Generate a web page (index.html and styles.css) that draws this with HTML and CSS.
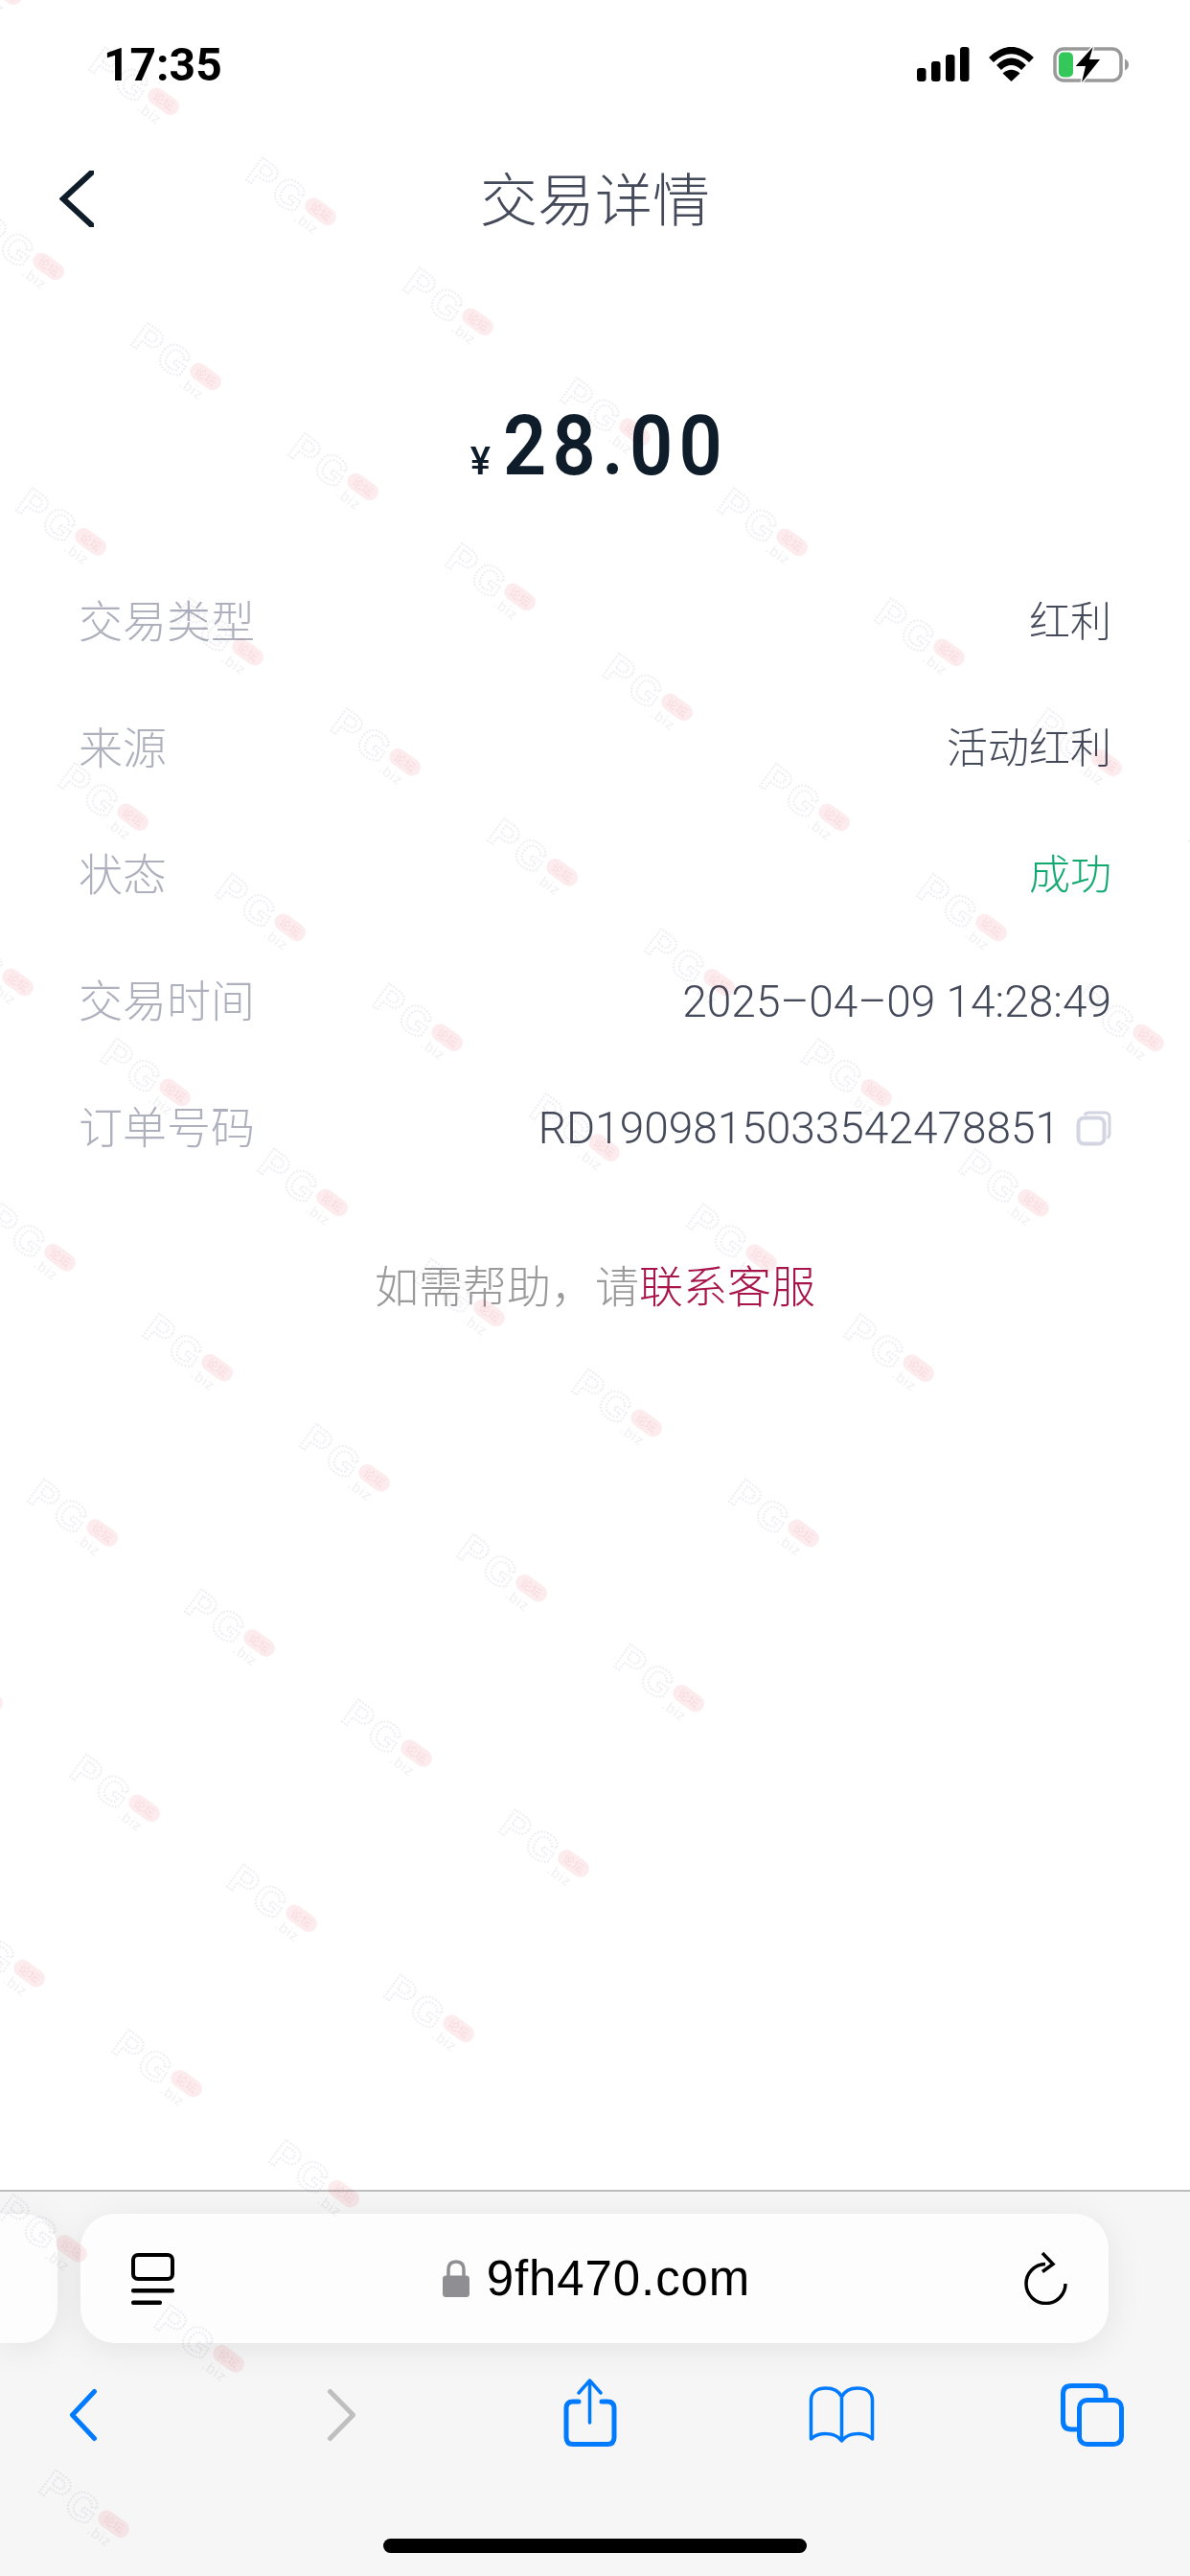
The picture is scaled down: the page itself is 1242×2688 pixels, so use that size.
FILE: index.html
```html
<!DOCTYPE html>
<html lang="zh-CN">
<head>
  <meta charset="UTF-8">
  <meta name="viewport" content="width=device-width, initial-scale=1.0">
  <title>交易详情</title>
  <link rel="stylesheet" href="styles.css">
</head>
<body>
  <div id="page">
    <div class="status-bar">
      <span class="time">17:35</span>
      <div class="status-icons">
        <svg width="55" height="36" viewBox="0 0 55 36">
          <rect x="0" y="22" width="9.5" height="14" rx="3"/>
          <rect x="15" y="15" width="9.5" height="21" rx="3"/>
          <rect x="30" y="8" width="9.5" height="28" rx="3"/>
          <rect x="45" y="0" width="9.5" height="36" rx="3"/>
        </svg>
        <svg width="47" height="36" viewBox="0 0 47 36">
          <path d="M2.5 13.5Q23.5 -6.500 44.500 13.500" fill="none" stroke="#000" stroke-width="7"/>
          <path d="M10.500 21.500Q23.500 9 36.500 21.500" fill="none" stroke="#000" stroke-width="7"/>
          <path d="M23.500 36L14.500 27.500Q23.500 20 32.500 27.500Z"/>
        </svg>
        <svg width="79" height="37" viewBox="0 0 79 37">
          <rect x="2" y="2" width="69" height="33" rx="9" fill="none" stroke="#999" stroke-width="3.500"/>
          <rect x="6" y="5.500" width="15" height="26" rx="5" fill="#34c759"/>
          <path d="M75 12.500C78 14 79 16 79 18.500C79 21 78 23 75 24.500Z" fill="#999"/>
          <path d="M41.700 0L23.700 20H34L30 37L49 13H38Z" stroke="#fff" stroke-width="3" paint-order="stroke"/>
        </svg>
      </div>
    </div>

    <div class="nav">
      <svg class="nav-back" width="36" height="59" viewBox="0 0 36 59">
        <path d="M38 -2L4 29.500L38 61" fill="none" stroke="#0f1d2b" stroke-width="6"/>
      </svg>
      <div class="nav-title">交易详情</div>
    </div>

    <div class="amount">
      <span class="amount-unit">¥</span><span class="amount-value">28.00</span>
    </div>

    <div class="rows">
      <div class="row"><span class="label">交易类型</span><span class="value">红利</span></div>
      <div class="row"><span class="label">来源</span><span class="value">活动红利</span></div>
      <div class="row"><span class="label">状态</span><span class="value success">成功</span></div>
      <div class="row"><span class="label">交易时间</span><span class="value num">2025–04–09 14:28:49</span></div>
      <div class="row">
        <span class="label">订单号码</span>
        <span class="value num with-icon">RD1909815033542478851
          <svg width="37" height="37" viewBox="0 0 37 37">
            <path d="M9 4.500C10 2.500 12 2 14 2H30C33.500 2 35 3.500 35 7V24C35 26 34.500 27.500 32.500 28.500" fill="none" stroke="#d3d6e2" stroke-width="3"/>
            <rect x="2.500" y="7.500" width="27" height="27" rx="6" fill="none" stroke="#d3d6e2" stroke-width="4"/>
          </svg>
        </span>
      </div>
    </div>

    <div class="help">如需帮助，请<span class="help-link">联系客服</span></div>

    <div class="toolbar">
      <div class="address-row">
        <div class="tab-stub"></div>
        <div class="address">
          <svg width="45" height="54" viewBox="0 0 45 54">
            <rect x="2" y="2" width="41" height="25" rx="5" fill="none" stroke="#000" stroke-width="4"/>
            <rect x="0" y="37" width="45" height="4.500" rx="2"/>
            <rect x="0" y="49.500" width="32" height="4.500" rx="2"/>
          </svg>
          <div class="url">
            <svg width="28" height="39" viewBox="0 0 28 39">
              <path d="M6 18V10.500C6 5 9 2 14 2C19 2 22 5 22 10.500V18" fill="none" stroke="#8e8e93" stroke-width="3.500"/>
              <rect x="0" y="16.500" width="28" height="22.500" rx="3.500" fill="#8e8e93"/>
            </svg>
            <span class="url-text">9fh470.com</span>
          </div>
          <svg width="46" height="55" viewBox="0 0 46 55">
            <path d="M22 12.500A20.500 20.500 0 1 0 43 33" fill="none" stroke="#000" stroke-width="3.500"/>
            <path d="M19 1L30 12.500L19 20.500" fill="none" stroke="#000" stroke-width="3.500"/>
          </svg>
        </div>
      </div>

      <div class="tools">
        <svg width="100" height="80" viewBox="0 0 100 80">
          <path d="M61.500 15.500L38.500 40L61.500 64.500" class="tool-line"/>
        </svg>
        <svg width="100" height="80" viewBox="0 0 100 80">
          <path d="M44.500 15.500L68.500 40L44.500 64.500" class="tool-line off"/>
        </svg>
        <svg width="100" height="80" viewBox="0 0 100 80">
          <path d="M41 26H35C30.500 26 28 28.500 28 33V63C28 68 30.500 70.500 35 70.500H71C75.500 70.500 78 68 78 63V33C78 28.500 75.500 26 71 26H65" class="tool-line"/>
          <path d="M52.500 4V48M41 17L52.500 4L64 17" class="tool-line thin"/>
        </svg>
        <svg width="100" height="80" viewBox="0 0 100 80">
          <path d="M52.500 21C49 14 42 12 36 12C27 12 20.500 16 20.500 25V65C28 58 45 57 52.500 67C60 57 77 58 84.500 65V25C84.500 16 78 12 69 12C63 12 56 14 52.500 21V66" class="tool-line thin"/>
        </svg>
        <svg width="100" height="80" viewBox="0 0 100 80">
          <path d="M34 55H29C23.500 55 20.500 52 20.500 46V18C20.500 12.500 23.500 9.500 29 9.500H56C62 9.500 65 12.500 65 18V22" class="tool-line"/>
          <rect x="37.500" y="24.500" width="44" height="46" rx="8" class="tool-line"/>
        </svg>
      </div>

      <div class="home-indicator"></div>
    </div>

    <svg id="watermark" width="1242" height="2688" viewBox="0 0 1242 2688">
      <defs>
        <g id="mark">
          <text class="mark-pg" x="-85" y="19">PG</text>
          <rect x="-18" y="-9" width="36" height="18" rx="9" fill="#fdecee"/>
          <text class="mark-pill" x="0" y="4.500">论坛</text>
          <text class="mark-biz" x="-18" y="24">.biz</text>
        </g>
      </defs>
    </svg>
  </div>

  <script src="script.js"></script>
</body>
</html>
```

FILE: styles.css
```css
* {
  box-sizing: border-box;
}
body {
  margin: 0;
  font-family: "Liberation Sans", "Noto Sans CJK SC", sans-serif;
  background: #fff;
}
#page {
  position: relative;
  width: 1242px;
  height: 2688px;
  display: flex;
  flex-direction: column;
  overflow: hidden;
  background: #fff;
}

/* Status bar */
.status-bar {
  height: 134px;
  padding: 0 64px 0 108px;
  display: flex;
  justify-content: space-between;
  align-items: center;
}
.time {
  font-family: Roboto, sans-serif;
  font-size: 48px;
  font-weight: 700;
  color: #000;
}
.status-icons {
  display: flex;
  gap: 20px;
  align-items: center;
}

/* Nav */
.nav {
  height: 146px;
  padding: 0 62px;
  display: grid;
  grid-template-columns: 1fr auto 1fr;
  align-items: center;
}
.nav-title {
  padding-bottom: 5px;
  font-family: "Noto Sans CJK SC", sans-serif;
  font-size: 60px;
  font-weight: 300;
  color: #444a5a;
}

/* Amount */
.amount {
  height: 301px;
  padding: 135px 0 0 22px;
  display: flex;
  justify-content: center;
  align-items: baseline;
  color: #0f1d2b;
  font-family: Roboto, sans-serif;
  line-height: 100px;
}
.amount-unit {
  font-size: 40px;
  font-weight: 500;
}
.amount-value {
  display: inline-block;
  font-size: 88px;
  font-weight: 600;
  letter-spacing: 7px;
  transform: scaleX(0.9);
}

/* Detail rows */
.row {
  height: 132px;
  padding: 0 82px 4px 82px;
  display: flex;
  justify-content: space-between;
  align-items: center;
  font-family: "Noto Sans CJK SC", sans-serif;
  font-size: 46px;
  font-weight: 300;
}
.label {
  color: #aeb1bd;
}
.value {
  font-size: 43px;
  color: #444a5a;
}
.success {
  color: #12a971;
}
.num {
  padding-top: 8px;
  font-family: Roboto, "Noto Sans CJK SC", sans-serif;
  font-size: 46px;
  font-weight: 300;
}
.with-icon {
  display: flex;
  align-items: center;
  gap: 17px;
}

/* Help line */
.help {
  margin-top: 48px;
  height: 100px;
  line-height: 100px;
  text-align: center;
  font-family: "Noto Sans CJK SC", sans-serif;
  font-size: 46px;
  font-weight: 300;
  color: #9a9a9a;
}
.help-link {
  color: #a8154a;
}

/* Browser toolbar */
.toolbar {
  margin-top: auto;
  height: 403px;
  padding-top: 23px;
  background: #f6f6f6;
  border-top: 2px solid #bdbdbd;
  display: flex;
  flex-direction: column;
}
.address-row {
  display: flex;
  gap: 24px;
  height: 135px;
}
.tab-stub {
  width: 60px;
  background: #fdfdfd;
  border-radius: 0 36px 36px 0;
  box-shadow: 0 6px 36px rgba(0,0,0,0.08);
}
.address {
  width: 1073px;
  padding: 0 42px 0 53px;
  background: #fdfdfd;
  border-radius: 36px;
  box-shadow: 0 6px 36px rgba(0,0,0,0.08);
  display: flex;
  justify-content: space-between;
  align-items: center;
}
.url {
  display: flex;
  align-items: center;
  gap: 18px;
  margin-right: 6px;
}
.url-text {
  font-size: 51px;
  letter-spacing: 0.9px;
  color: #000;
}
.tools {
  margin-top: 35px;
  padding: 0 53px 0 37px;
  display: flex;
  justify-content: space-between;
}
.tool-line {
  fill: none;
  stroke: #007aff;
  stroke-width: 5;
  stroke-linecap: round;
  stroke-linejoin: round;
}
.tool-line.thin {
  stroke-width: 3.500;
}
.tool-line.off {
  stroke: #bfbfbf;
}
.home-indicator {
  width: 442px;
  height: 15px;
  margin: 89px auto 0;
  background: #000;
  border-radius: 8px;
}

/* Site watermark over the whole page */
#watermark {
  position: absolute;
  top: 0;
  left: 0;
  pointer-events: none;
  mix-blend-mode: multiply;
}
.mark-pg {
  font-family: "Liberation Sans", sans-serif;
  font-size: 42px;
  font-weight: 700;
  letter-spacing: 4px;
  fill: none;
  stroke: #efeff3;
  stroke-width: 2;
  stroke-dasharray: 2 1.500;
}
.mark-pill {
  font-family: "Noto Sans CJK SC", sans-serif;
  font-size: 12px;
  text-anchor: middle;
  fill: #f8dade;
}
.mark-biz {
  font-family: "Liberation Sans", sans-serif;
  font-size: 15px;
  letter-spacing: 1px;
  fill: #f0f0f3;
}
```

FILE: script.js
```js
// watermark repeats on a slanted lattice, only this block of it is on the page
const svgNS = "http://www.w3.org/2000/svg";
const watermark = document.getElementById("watermark");

for (let n = -20; n <= 5; n++) {
  for (let m = -1; m <= 20; m++) {
    const x = 378.6 + n * 164 - m * 120;
    const y = 508 + n * 115 + m * 172.3;
    if (x < -60 || x > 1320 || y < -60 || y > 2750) continue;

    const mark = document.createElementNS(svgNS, "use");
    mark.setAttribute("href", "#mark");
    mark.setAttribute("transform", `translate(${x} ${y}) rotate(36)`);
    watermark.appendChild(mark);
  }
}
```
